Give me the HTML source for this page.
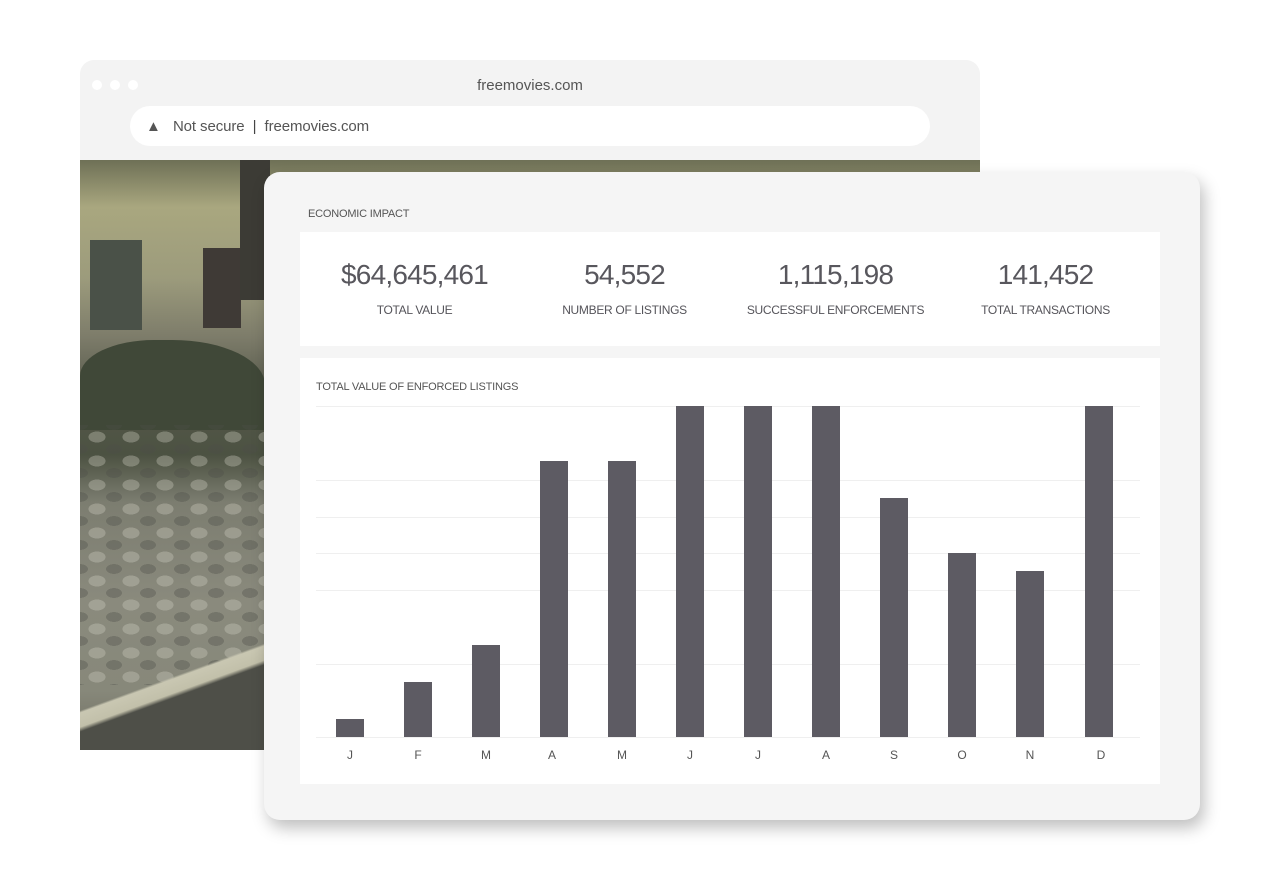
<!DOCTYPE html>
<html><head><meta charset="utf-8"><style>
*{margin:0;padding:0;box-sizing:border-box}
body{width:1280px;height:880px;background:#fff;position:relative;overflow:hidden;font-family:"Liberation Sans",sans-serif;color:#55545a}
.win{position:absolute;left:80px;top:60px;width:900px;height:690px;background:#f3f3f3;border-radius:14px 14px 0 0;overflow:hidden}
.dot{position:absolute;top:20px;width:10px;height:10px;border-radius:50%;background:#fff}
.title{position:absolute;top:17px;left:0;width:900px;text-align:center;font-size:15px;color:#555}
.addr{position:absolute;left:50px;top:46px;width:800px;height:40px;background:#fff;border-radius:20px;font-size:15px;color:#555;line-height:42px;padding-left:16px;letter-spacing:-.1px}
.photo{position:absolute;left:0;top:100px;width:902px;height:590px;background:linear-gradient(180deg,#6e7056 0%,#a9a77f 8%,#9c9b7c 20%,#7d7c6a 30%,#55584a 40%,#4c5242 50%,#7c7d70 58%,#8a8a7d 75%,#87887a 90%,#6d6c60 100%)}
.cars{position:absolute;left:0;top:265px;width:185px;height:260px;background:radial-gradient(ellipse 14px 9px at 50% 50%,#d0cfc2 60%,transparent 62%) 0 0/34px 24px,radial-gradient(ellipse 13px 8px at 50% 50%,#4e4f49 60%,transparent 62%) 17px 12px/34px 24px;opacity:.35}
.card{position:absolute;left:264px;top:172px;width:936px;height:648px;background:#f5f5f5;border-radius:16px;box-shadow:4px 8px 16px rgba(0,0,0,.25)}
.lbl{position:absolute;font-size:11px;color:#555;letter-spacing:-.2px}
.stats{position:absolute;left:36px;top:60px;width:860px;height:114px;background:#fff}
.st{position:absolute;top:27px;width:215px;text-align:center}
.st b{display:block;font-weight:normal;font-size:28px;color:#58575d;letter-spacing:-.8px}
.st span{display:block;font-size:12px;margin-top:12px;color:#55545a;letter-spacing:-.3px}
.chart{position:absolute;left:36px;top:186px;width:860px;height:426px;background:#fff}
.g{position:absolute;left:16px;width:824px;height:1px;background:#efefef}
.bar{position:absolute;width:28px;background:#5d5b63;bottom:47px}
.m{position:absolute;top:390px;width:40px;text-align:center;font-size:12px;color:#555}
</style></head><body>
<div class="win">
 <div class="dot" style="left:12px"></div><div class="dot" style="left:30px"></div><div class="dot" style="left:48px"></div>
 <div class="title">freemovies.com</div>
 <div class="addr"><span style="font-size:15px">▲</span>&nbsp;&nbsp; Not secure &nbsp;<span style="color:#444">|</span>&nbsp; freemovies.com</div>
 <div class="photo">
  <div style="position:absolute;left:10px;top:80px;width:52px;height:90px;background:#4a5148"></div>
  <div style="position:absolute;left:123px;top:88px;width:38px;height:80px;background:#3f3a36"></div>
  <div style="position:absolute;left:160px;top:0;width:30px;height:140px;background:#3c3b35"></div>
  <div style="position:absolute;left:0;top:180px;width:185px;height:90px;background:#404838;border-radius:40% 50% 0 0"></div>
  <div class="cars"></div>
  <div style="position:absolute;left:0;top:420px;width:185px;height:170px;background:linear-gradient(160deg,transparent 55%,#c9c7b2 56%,#c2c0aa 62%,#4e4f48 64%)"></div>
 </div>
</div>
<div class="card">
 <div class="lbl" style="left:44px;top:36px">ECONOMIC IMPACT</div>
 <div class="stats">
  <div class="st" style="left:7px"><b>$64,645,461</b><span>TOTAL VALUE</span></div>
  <div class="st" style="left:217px"><b>54,552</b><span>NUMBER OF LISTINGS</span></div>
  <div class="st" style="left:428px"><b>1,115,198</b><span>SUCCESSFUL ENFORCEMENTS</span></div>
  <div class="st" style="left:638px"><b>141,452</b><span>TOTAL TRANSACTIONS</span></div>
 </div>
 <div class="chart">
  <div class="lbl" style="left:16px;top:23px">TOTAL VALUE OF ENFORCED LISTINGS</div>
  <div class="g" style="top:48px"></div><div class="g" style="top:122px"></div><div class="g" style="top:159px"></div><div class="g" style="top:195px"></div><div class="g" style="top:232px"></div><div class="g" style="top:306px"></div><div class="g" style="top:379px"></div>
  <div class="bar" style="left:36px;height:18px"></div>
  <div class="bar" style="left:104px;height:55px"></div>
  <div class="bar" style="left:172px;height:92px"></div>
  <div class="bar" style="left:240px;height:276px"></div>
  <div class="bar" style="left:308px;height:276px"></div>
  <div class="bar" style="left:376px;height:331px"></div>
  <div class="bar" style="left:444px;height:331px"></div>
  <div class="bar" style="left:512px;height:331px"></div>
  <div class="bar" style="left:580px;height:239px"></div>
  <div class="bar" style="left:648px;height:184px"></div>
  <div class="bar" style="left:716px;height:166px"></div>
  <div class="bar" style="left:785px;height:331px"></div>
  <div class="m" style="left:30px">J</div><div class="m" style="left:98px">F</div><div class="m" style="left:166px">M</div><div class="m" style="left:232px">A</div><div class="m" style="left:302px">M</div><div class="m" style="left:370px">J</div><div class="m" style="left:438px">J</div><div class="m" style="left:506px">A</div><div class="m" style="left:574px">S</div><div class="m" style="left:642px">O</div><div class="m" style="left:710px">N</div><div class="m" style="left:781px">D</div>
 </div>
</div>
</body></html>
